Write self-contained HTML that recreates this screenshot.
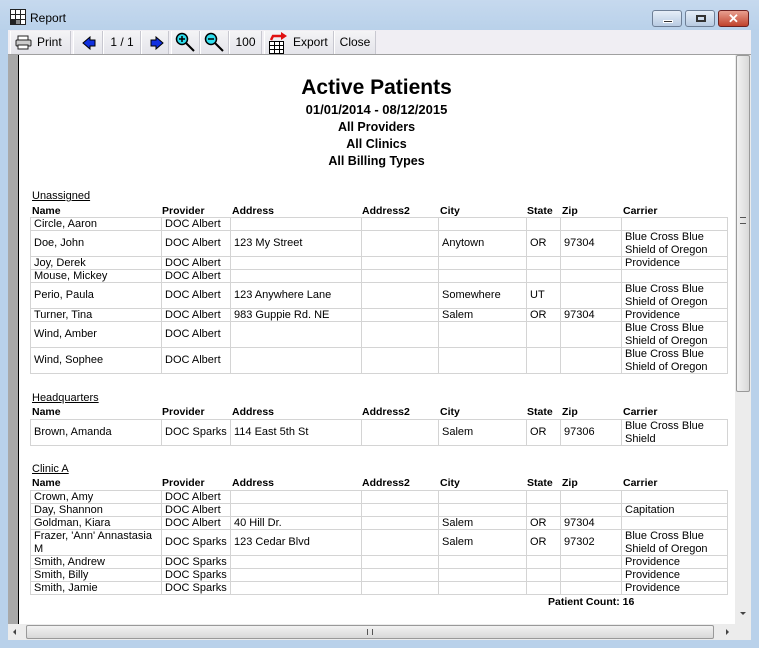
<!DOCTYPE html>
<html><head><meta charset="utf-8"><style>
*{margin:0;padding:0;box-sizing:border-box}
body{width:759px;height:648px;overflow:hidden;background:#b9d1ea;font-family:"Liberation Sans",sans-serif;font-size:11px;color:#000;position:relative}
.abs{position:absolute}
.title{left:30px;top:11px;font-size:12px}
.tb{left:8px;top:30px;width:743px;height:25px;background:#f0eef3;border-bottom:1px solid #a0a0a0}
.btn{position:absolute;top:1px;height:23px;background:linear-gradient(#f4f4f6,#e4e4ea);border-right:1px solid #c8c8d0;border-left:1px solid #fff;font-size:12px;line-height:23px;color:#000}
.page{left:8px;top:55px;width:727px;height:569px;background:#a8a8a8}
.white{left:18px;top:55px;width:717px;height:569px;background:#fff;border-left:1px solid #000}
.vs{left:735px;top:55px;width:16px;height:569px;background:#ececec}
.hs{left:8px;top:624px;width:743px;height:16px;background:#ececec}
table{position:absolute;left:30px;border-collapse:collapse;table-layout:fixed;width:697px}
td{border:1px solid #d4d4d4;padding:0 3px;font-size:11px;line-height:12px;height:12px;vertical-align:middle;white-space:nowrap;overflow:hidden}
tr.t td{height:25px;line-height:12.5px}
td.w{white-space:normal}
.hdr{position:absolute;left:30px;font-weight:bold;font-size:10.5px}
.hdr span{position:absolute;top:0}
.sec{position:absolute;left:32px;text-decoration:underline;font-size:11px}
.c{text-align:center;font-weight:bold;position:absolute;left:18px;width:717px}
</style></head><body>
<div class="abs" style="left:0;top:0;width:759px;height:30px;background:linear-gradient(#c6d9ee,#b9d1ea)"></div>
<div class="abs" style="left:10px;top:9px;width:16px;height:16px;border:1px solid #222;background:#fff">
<div class="abs" style="left:4px;top:0;width:1px;height:14px;background:#222"></div><div class="abs" style="left:9px;top:0;width:1px;height:14px;background:#222"></div>
<div class="abs" style="left:0;top:4px;width:14px;height:1px;background:#222"></div><div class="abs" style="left:0;top:9px;width:14px;height:1px;background:#222"></div>
<div class="abs" style="left:0;top:10px;width:4px;height:4px;background:#222"></div><div class="abs" style="left:5px;top:10px;width:4px;height:4px;background:#888"></div></div>
<div class="abs title">Report</div>
<div class="abs" style="left:652px;top:10px;width:30px;height:17px;border:1px solid #6e7f96;border-radius:3px;background:linear-gradient(#e6eef8,#b8cbe2)"><div class="abs" style="left:10px;top:9px;width:10px;height:3px;background:#333;border:1px solid #fff"></div></div>
<div class="abs" style="left:685px;top:10px;width:30px;height:17px;border:1px solid #6e7f96;border-radius:3px;background:linear-gradient(#e6eef8,#b8cbe2)"><div class="abs" style="left:10px;top:4px;width:10px;height:7px;border:2px solid #333"></div></div>
<div class="abs" style="left:718px;top:10px;width:31px;height:17px;border:1px solid #6b2020;border-radius:3px;background:linear-gradient(#e8a090,#c0422c);color:#fff;font-weight:bold;text-align:center;line-height:15px;font-size:13px">✕</div>
<div class="abs tb">
<div class="btn" style="left:2px;width:61px"><svg class="abs" style="left:4px;top:4px" width="17" height="15"><rect x="3" y="1" width="10" height="5" fill="#fff" stroke="#222"/><rect x="1" y="5" width="15" height="6" rx="1" fill="#ccc" stroke="#222"/><rect x="3" y="10" width="10" height="4" fill="#fff" stroke="#222"/></svg><span class="abs" style="left:26px">Print</span></div>
<div class="btn" style="left:65px;width:30px"><svg class="abs" style="left:8px;top:5px" width="14" height="14"><polygon points="1,7 8,1 8,4 13,4 13,10 8,10 8,13" fill="#1030e0" stroke="#000"/></svg></div>
<div class="btn" style="left:95px;width:38px;text-align:center">1 / 1</div>
<div class="btn" style="left:133px;width:28px"><svg class="abs" style="left:8px;top:5px" width="14" height="14"><polygon points="13,7 6,1 6,4 1,4 1,10 6,10 6,13" fill="#1030e0" stroke="#000"/></svg></div>
<div class="btn" style="left:163px;width:29px"><svg class="abs" style="left:3px;top:1px" width="22" height="22"><line x1="10" y1="10" x2="19" y2="19" stroke="#000" stroke-width="2"/><circle cx="7" cy="7" r="5.5" fill="#30e0f0" stroke="#000" stroke-width="1.5"/><path d="M4 7h6M7 4v6" stroke="#000" stroke-width="1.5"/></svg></div>
<div class="btn" style="left:192px;width:29px"><svg class="abs" style="left:3px;top:1px" width="22" height="22"><line x1="10" y1="10" x2="19" y2="19" stroke="#000" stroke-width="2"/><circle cx="7" cy="7" r="5.5" fill="#30e0f0" stroke="#000" stroke-width="1.5"/><path d="M4 7h6" stroke="#000" stroke-width="1.5"/></svg></div>
<div class="btn" style="left:221px;width:33px;text-align:center">100</div>
<div class="btn" style="left:256px;width:70px"><svg class="abs" style="left:3px;top:0" width="24" height="23"><path d="M3 9 L5 5 H14" stroke="#e01010" stroke-width="2.5" fill="none"/><polygon points="13,1 19,5 13,9" fill="#e01010"/><rect x="1.5" y="10.5" width="14" height="12" fill="#fff" stroke="#000"/><path d="M1.5 14.5h14M1.5 18.5h14M6.5 10.5v12M11.5 10.5v12" stroke="#000"/></svg><span class="abs" style="left:28px">Export</span></div>
<div class="btn" style="left:326px;width:42px;text-align:center">Close</div>
</div>
<div class="abs page"></div>
<div class="abs white"></div>
<div class="abs vs"><div class="abs" style="left:1px;top:0;width:14px;height:337px;background:linear-gradient(90deg,#f2f2f2,#d8d8d8);border:1px solid #999;border-radius:2px"><div class="abs" style="left:3px;top:161px;width:6px;height:7px;border-top:1px solid #555;border-bottom:1px solid #555"></div></div>
<div class="abs" style="left:5px;top:557px;width:0;height:0;border-left:3px solid transparent;border-right:3px solid transparent;border-top:3px solid #444"></div></div>
<div class="abs hs"><div class="abs" style="left:5px;top:5px;border-top:3px solid transparent;border-bottom:3px solid transparent;border-right:3px solid #444"></div>
<div class="abs" style="left:18px;top:1px;width:688px;height:14px;background:linear-gradient(#f2f2f2,#d8d8d8);border:1px solid #999;border-radius:2px"><div class="abs" style="left:340px;top:3px;width:6px;height:6px;border-left:1px solid #555;border-right:1px solid #555"></div></div>
<div class="abs" style="left:718px;top:5px;border-top:3px solid transparent;border-bottom:3px solid transparent;border-left:3px solid #444"></div></div>
<div class="abs" style="left:0;top:640px;width:759px;height:8px;background:#b9d1ea"></div>

<div class="c" style="top:76px;font-size:21px">Active Patients</div>
<div class="c" style="top:102px;font-size:13px">01/01/2014 - 08/12/2015</div>
<div class="c" style="top:120px;font-size:12.5px">All Providers</div>
<div class="c" style="top:137px;font-size:12.5px">All Clinics</div>
<div class="c" style="top:154px;font-size:12.5px">All Billing Types</div>

<div class="sec" style="top:190px">Unassigned</div>
<div class="hdr" style="top:205px"><span style="left:2px">Name</span><span style="left:132px">Provider</span><span style="left:202px">Address</span><span style="left:332px">Address2</span><span style="left:410px">City</span><span style="left:497px">State</span><span style="left:532px">Zip</span><span style="left:593px">Carrier</span></div>
<table style="top:217px">
<colgroup><col style="width:131px"><col style="width:69px"><col style="width:131px"><col style="width:77px"><col style="width:88px"><col style="width:34px"><col style="width:61px"><col style="width:106px"></colgroup>
<tr><td>Circle, Aaron</td><td>DOC Albert</td><td></td><td></td><td></td><td></td><td></td><td></td></tr>
<tr class="t"><td>Doe, John</td><td>DOC Albert</td><td>123 My Street</td><td></td><td>Anytown</td><td>OR</td><td>97304</td><td class="w">Blue Cross Blue Shield of Oregon</td></tr>
<tr><td>Joy, Derek</td><td>DOC Albert</td><td></td><td></td><td></td><td></td><td></td><td>Providence</td></tr>
<tr><td>Mouse, Mickey</td><td>DOC Albert</td><td></td><td></td><td></td><td></td><td></td><td></td></tr>
<tr class="t"><td>Perio, Paula</td><td>DOC Albert</td><td>123 Anywhere Lane</td><td></td><td>Somewhere</td><td>UT</td><td></td><td class="w">Blue Cross Blue Shield of Oregon</td></tr>
<tr><td>Turner, Tina</td><td>DOC Albert</td><td>983 Guppie Rd. NE</td><td></td><td>Salem</td><td>OR</td><td>97304</td><td>Providence</td></tr>
<tr class="t"><td>Wind, Amber</td><td>DOC Albert</td><td></td><td></td><td></td><td></td><td></td><td class="w">Blue Cross Blue Shield of Oregon</td></tr>
<tr class="t"><td>Wind, Sophee</td><td>DOC Albert</td><td></td><td></td><td></td><td></td><td></td><td class="w">Blue Cross Blue Shield of Oregon</td></tr>
</table>

<div class="sec" style="top:392px">Headquarters</div>
<div class="hdr" style="top:406px"><span style="left:2px">Name</span><span style="left:132px">Provider</span><span style="left:202px">Address</span><span style="left:332px">Address2</span><span style="left:410px">City</span><span style="left:497px">State</span><span style="left:532px">Zip</span><span style="left:593px">Carrier</span></div>
<table style="top:419px">
<colgroup><col style="width:131px"><col style="width:69px"><col style="width:131px"><col style="width:77px"><col style="width:88px"><col style="width:34px"><col style="width:61px"><col style="width:106px"></colgroup>
<tr class="t"><td>Brown, Amanda</td><td>DOC Sparks</td><td>114 East 5th St</td><td></td><td>Salem</td><td>OR</td><td>97306</td><td class="w">Blue Cross Blue Shield</td></tr>
</table>

<div class="sec" style="top:463px">Clinic A</div>
<div class="hdr" style="top:477px"><span style="left:2px">Name</span><span style="left:132px">Provider</span><span style="left:202px">Address</span><span style="left:332px">Address2</span><span style="left:410px">City</span><span style="left:497px">State</span><span style="left:532px">Zip</span><span style="left:593px">Carrier</span></div>
<table style="top:490px">
<colgroup><col style="width:131px"><col style="width:69px"><col style="width:131px"><col style="width:77px"><col style="width:88px"><col style="width:34px"><col style="width:61px"><col style="width:106px"></colgroup>
<tr><td>Crown, Amy</td><td>DOC Albert</td><td></td><td></td><td></td><td></td><td></td><td></td></tr>
<tr><td>Day, Shannon</td><td>DOC Albert</td><td></td><td></td><td></td><td></td><td></td><td>Capitation</td></tr>
<tr><td>Goldman, Kiara</td><td>DOC Albert</td><td>40 Hill Dr.</td><td></td><td>Salem</td><td>OR</td><td>97304</td><td></td></tr>
<tr class="t"><td class="w">Frazer, 'Ann' Annastasia M</td><td>DOC Sparks</td><td>123 Cedar Blvd</td><td></td><td>Salem</td><td>OR</td><td>97302</td><td class="w">Blue Cross Blue Shield of Oregon</td></tr>
<tr><td>Smith, Andrew</td><td>DOC Sparks</td><td></td><td></td><td></td><td></td><td></td><td>Providence</td></tr>
<tr><td>Smith, Billy</td><td>DOC Sparks</td><td></td><td></td><td></td><td></td><td></td><td>Providence</td></tr>
<tr><td>Smith, Jamie</td><td>DOC Sparks</td><td></td><td></td><td></td><td></td><td></td><td>Providence</td></tr>
</table>
<div class="abs" style="left:548px;top:596px;font-weight:bold;font-size:10.5px">Patient Count: 16</div>
</body></html>
